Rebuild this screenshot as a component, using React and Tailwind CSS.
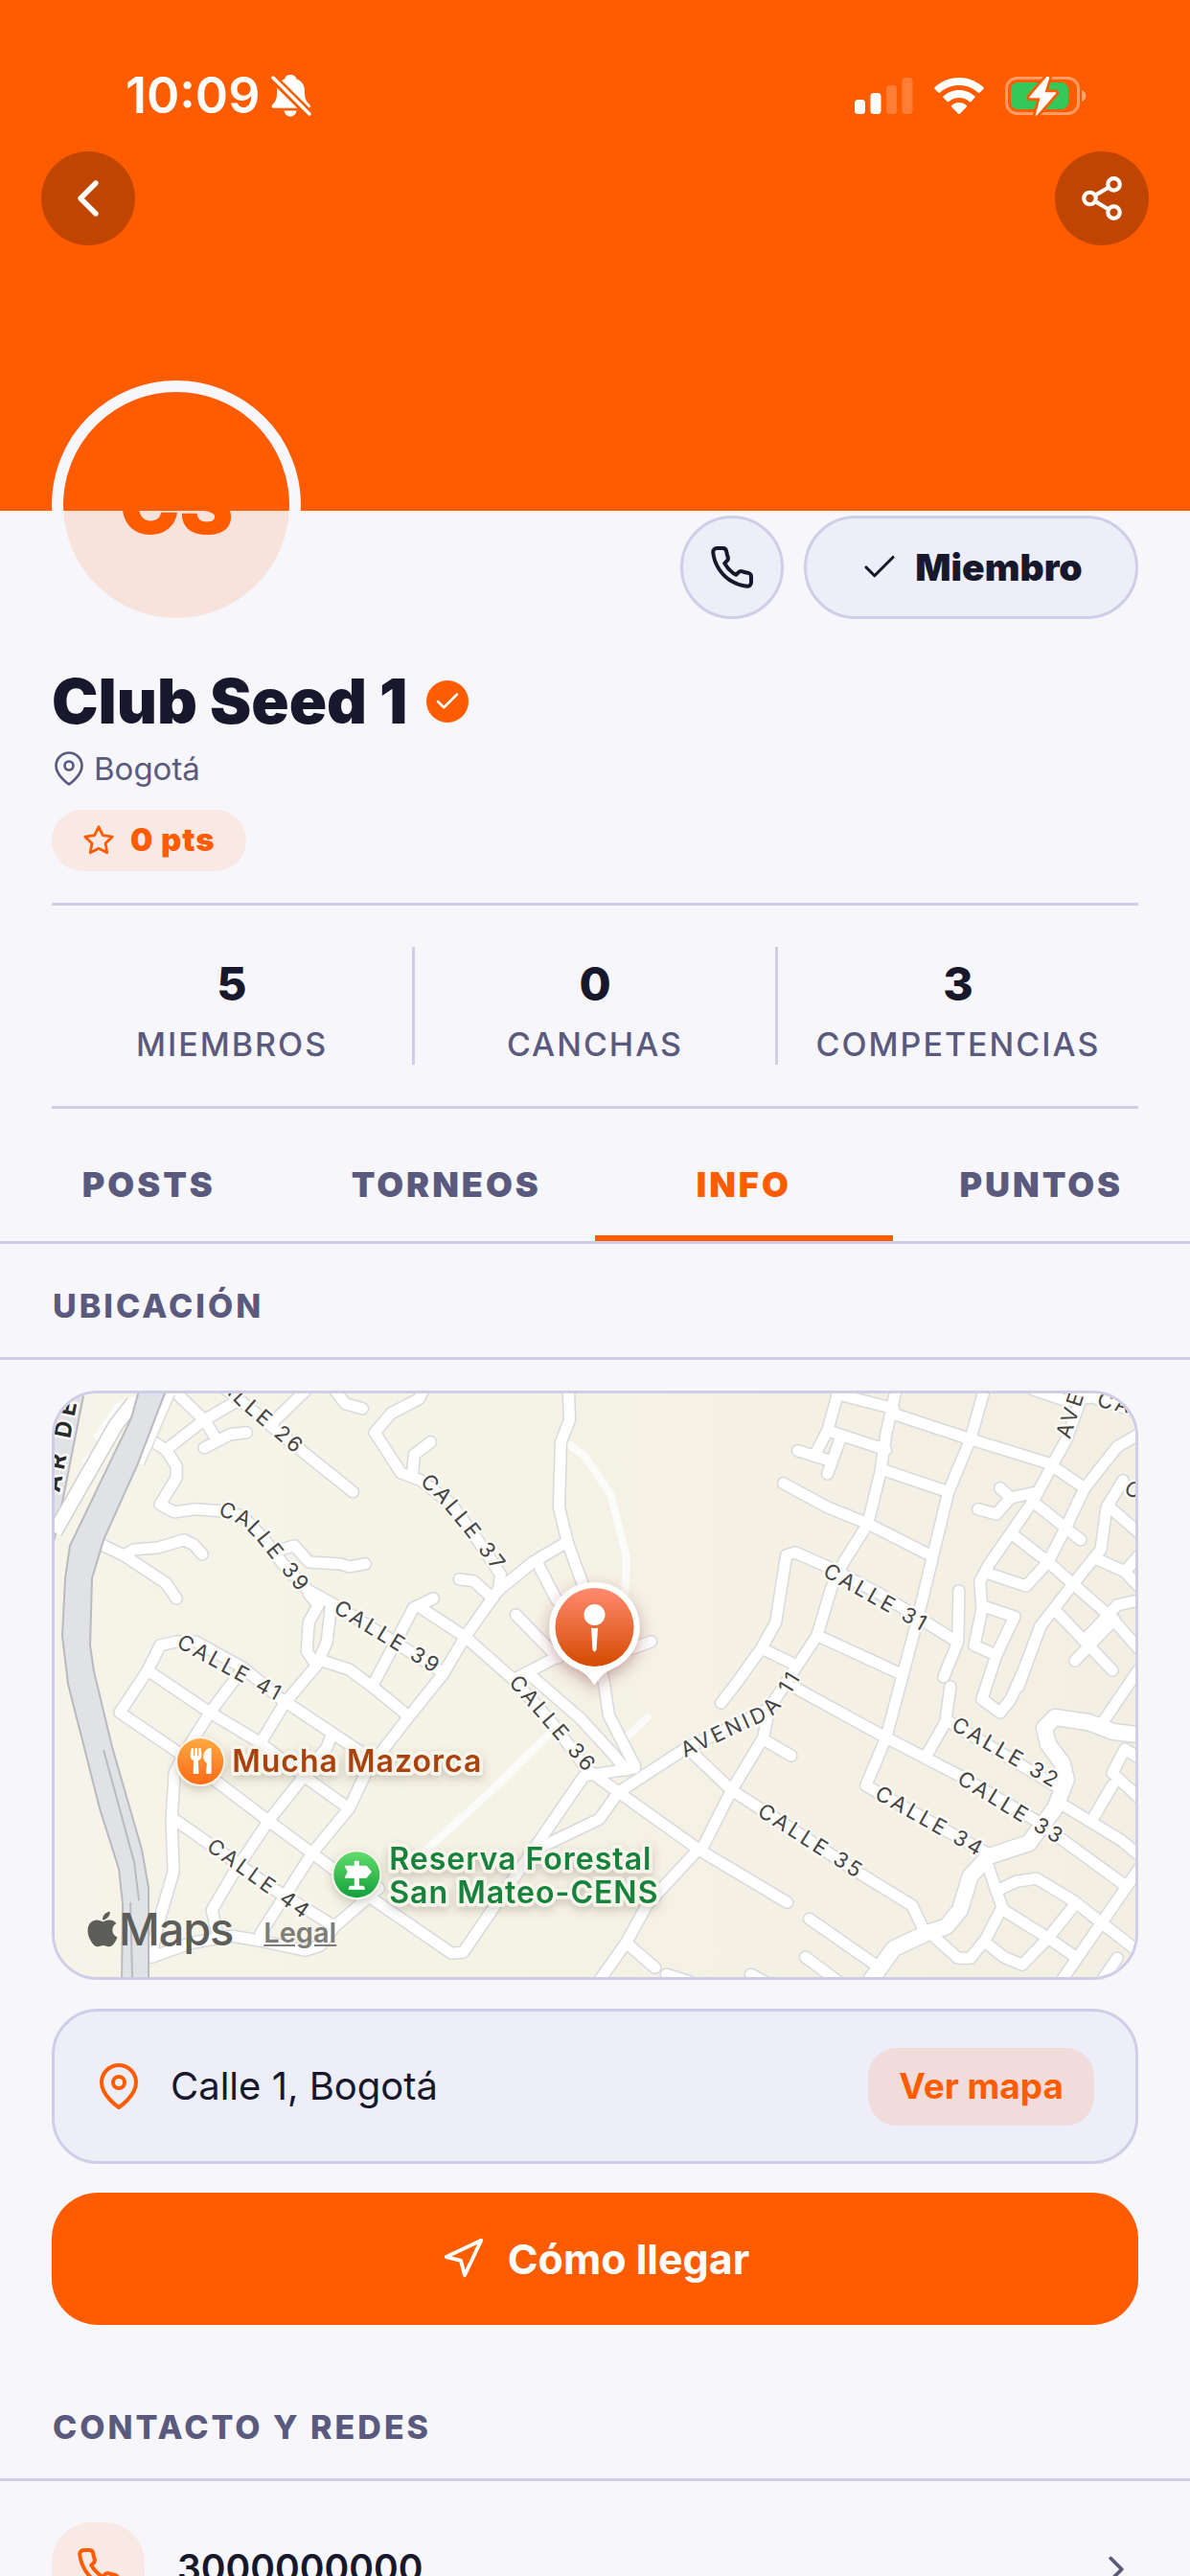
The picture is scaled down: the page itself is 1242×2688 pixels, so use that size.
import { useState } from "react";
import {
  FiCheck,
  FiChevronLeft,
  FiChevronRight,
  FiMapPin,
  FiNavigation,
  FiPhone,
  FiShare2,
  FiStar,
} from "react-icons/fi";
import { FaApple, FaUtensils } from "react-icons/fa";

const STATS = [
  { value: 5, label: "Miembros" },
  { value: 0, label: "Canchas" },
  { value: 3, label: "Competencias" },
];

const TABS = ["Posts", "Torneos", "Info", "Puntos"];

// Street centre lines, in map units (1127 x 609)
const STREETS = [
  "M125 -2 L156 28 L169 48",
  "M156 57 L183 43 L200 41",
  "M189 9 L156 28 L116 59",
  "M99 48 L116 59 L127 76 L127 88 L110 116 L125 124 L146 121 L173 123 L196 128 L219 153 L242 183 L265 206 L296 223 L400 288",
  "M179 -4 L200 13 L250 54 L311 103",
  "M261 -2 L229 29",
  "M293 -2 L303 11 L321 16",
  "M384 -2 L380 6 L351 21 L334 41 L361 83 L382 91 L414 116 L441 153 L465 189 L463 206",
  "M373 86 L375 64 L392 51",
  "M536 -2 L537 28 L528 51 L526 119 L535 156 L552 203 L573 303 L578 336 L605 389",
  "M533 156 L499 176 L462 206 L428 254 L405 293 L368 339 L326 393 L307 433 L269 479 L215 563",
  "M504 178 L522 213 L550 250",
  "M422 194 L437 196 L457 214",
  "M49 158 L72 169 L116 198 L127 214",
  "M72 169 L83 163 L108 161 L135 153 L145 158 L154 168",
  "M236 163 L250 159 L265 176 L298 178 L307 181 L324 178",
  "M265 209 L275 221 L265 239 L263 269 L273 284",
  "M288 223 L284 259 L273 284 L240 323 L215 364",
  "M192 293 L162 333 L135 376 L125 396 L122 446 L124 499 L108 553 L101 586",
  "M288 358 L284 369 L223 446 L185 503 L164 539 L169 560",
  "M279 279 L307 288 L334 308 L368 336",
  "M395 214 L374 224 L359 253 L332 304",
  "M382 224 L428 254 L479 299 L518 343 L556 393 L588 416 L672 476 L764 531",
  "M481 231 L525 276",
  "M495 293 L548 339 L582 376 L596 393",
  "M480 298 L522 276",
  "M603 266 L622 259",
  "M97 289 L68 333 L131 376 L223 446 L273 483 L334 529 L414 584 L426 583 L506 466 L552 399 L605 391",
  "M97 289 L110 263 L127 259 L147 259 L196 286 L235 318 L328 380",
  "M97 289 L162 333 L212 363 L265 403 L307 433",
  "M127 446 L166 473 L227 516 L292 556",
  "M101 588 L143 573 L185 566 L215 571 L261 581 L277 576 L292 556 L338 516",
  "M510 472 L568 444 L588 416",
  "M588 416 L657 371 L703 349 L745 329 L775 283 L795 253 L810 203 L823 176 L848 136 L861 83 L867 43 L877 -2",
  "M745 329 L739 359 L706 414 L676 473 L668 479 L618 533 L596 573 L569 611",
  "M739 361 L768 378",
  "M664 374 L706 414 L745 439 L837 499 L894 534 L908 563",
  "M596 573 L626 599",
  "M638 606 L661 613",
  "M726 606 L741 614",
  "M783 588 L818 614",
  "M787 548 L856 596",
  "M695 323 L712 301 L737 266 L752 239 L763 169 L772 166 L806 181 L860 209 L909 239 L936 256",
  "M737 266 L772 283",
  "M760 94 L806 119 L848 136 L913 169",
  "M969 -2 L955 48 L932 103 L915 173 L898 243 L883 299 L867 359 L846 409 L863 419 L971 479",
  "M796 253 L883 293",
  "M772 307 L867 359 L944 399 L1024 446 L1116 513",
  "M816 1 L875 16",
  "M873 21 L955 48 L1036 73 L1074 99",
  "M818 -4 L806 39 L793 64",
  "M806 39 L867 59",
  "M775 60 L810 71",
  "M819 48 L806 84",
  "M867 81 L932 103",
  "M1074 -4 L1055 48 L1020 113 L974 179 L965 196 L967 226 L959 263 L982 273",
  "M986 99 L997 109 L1020 104",
  "M963 121 L982 126 L997 109",
  "M1130 43 L1108 56 L1074 99 L1055 139 L1036 176 L1013 201 L974 188",
  "M1020 113 L1070 153",
  "M1001 149 L1036 176 L1062 199 L1101 233 L1130 266",
  "M1114 91 L1097 119 L1091 163 L1062 199 L1028 243 L1005 306",
  "M1099 118 L1130 145",
  "M1087 173 L1116 186 L1130 201",
  "M1130 170 L1116 186",
  "M1043 226 L1103 289",
  "M1064 279 L1105 236",
  "M1130 216 L1108 221 L1078 253",
  "M971 223 L1001 233 L982 273 L967 319 L986 333 L997 319 L1010 290 L1028 243",
  "M943 206 L942 259 L927 296",
  "M934 306 L929 343 L909 378",
  "M930 341 L1043 409",
  "M1020 -4 L1055 8 L1082 4 L1130 20",
  "M1130 289 L1093 343",
  "M1130 380 L1116 371 L1103 396 L1130 421",
  "M1103 409 L1083 443",
  "M1051 429 L1112 466 L1130 481",
  "M1130 497 L1051 611",
  "M971 486 L988 536 L971 569 L955 589 L942 589 L913 563",
  "M982 519 L1003 509 L1024 506 L1062 529 L1131 583",
  "M988 538 L1036 568 L1062 586",
  "M1064 533 L1036 568 L1009 596 L990 588 L971 573",
  "M1108 589 L1093 611",
];

const AVENUE =
  "M1130 356 L1104 353 L1078 343 L1043 338 L1032 349 L1036 366 L1051 386 L1055 403 L1043 433 L1016 469 L974 483 L955 503 L944 539 L930 556 L909 563 L875 579 L852 611";

const FOOTPATHS = [
  "M537 54 L553 66 L580 106 L596 169 L595 209",
  "M388 476 L457 413 L518 353",
  "M597 358 L618 338",
  "M33 70 L48 62 L30 85 M45 45 L66 15 L82 8",
];

const STREET_NAMES = [
  { text: "CALLE 26", d: "M165 -26 L198 8 L290 87" },
  { text: "CALLE 37", d: "M386 88 L406 107 L432 138 L492 216" },
  { text: "CALLE 39", d: "M173 119 L200 131 L217 148 L277 223" },
  { text: "CALLE 39", d: "M294 221 L430 304" },
  { text: "CALLE 41", d: "M130 257 L270 333" },
  { text: "CALLE 36", d: "M479 297 L580 414" },
  { text: "CALLE 44", d: "M162 469 L300 568" },
  { text: "AVENIDA 11", d: "M654 373 L700 351 L742 332 L758 314 L790 262" },
  { text: "CALLE 31", d: "M804 183 L940 259" },
  { text: "CALLE 32", d: "M938 343 L1080 425" },
  { text: "CALLE 33", d: "M944 399 L1090 488" },
  { text: "CALLE 34", d: "M858 415 L1000 495" },
  { text: "CALLE 35", d: "M736 433 L870 518" },
  { text: "AVENIDA", d: "M1051 46 L1085 -60" },
  { text: "CALLE", d: "M1088 6 L1200 30" },
  { text: "CALLE", d: "M1118 96 L1220 160" },
];

function StatusBar() {
  return (
    <div className="flex items-center justify-between pt-[68px] pr-[107px] pl-[131px] text-white">
      <div className="flex items-center gap-3">
        <span className="text-[52px] leading-[64px] font-semibold">10:09</span>
        <svg className="h-[46px] w-[42px]" viewBox="0 0 42 46" fill="currentColor">
          <path d="M20 1c3.600 0 6 2 6.700 4.600C33 8 35 13 35 19c0 7 1.500 9.500 5 13 1.500 1.700 1 3.800-1 3.800H3c-2.500 0-3-2.200-1.500-3.800C5 28.500 6 26 6 19c0-7 3-11.500 8-13.400C14.600 3 16.500 1 20 1z" />
          <path d="M13.500 38.500h13c-.5 3.700-3.200 6-6.500 6s-6-2.300-6.500-6z" />
          <path d="M1.500 4L41 43" className="stroke-[#ff5c00]" strokeWidth="9" />
          <path d="M2 4L40 42" stroke="currentColor" strokeWidth="3.500" strokeLinecap="round" />
        </svg>
      </div>
      <div className="flex items-center gap-[22px]">
        <svg className="h-10 w-[61px]" viewBox="0 0 61 40" fill="currentColor">
          <rect x="0" y="24" width="11" height="15" rx="3.500" />
          <rect x="16.500" y="17" width="11" height="22" rx="3.500" />
          <rect x="33" y="9" width="11" height="30" rx="3.500" opacity=".22" />
          <rect x="49.500" y="1" width="11" height="38" rx="3.500" opacity=".22" />
        </svg>
        <svg className="h-10 w-[52px]" viewBox="0 0 52 40" fill="currentColor">
          <path d="M26 1C36 1 45 5 51.300 11c.6.600.6 1.300 0 1.900l-3.600 3.600c-.6.600-1.300.5-1.900 0C40.500 11.600 33.500 9 26 9S11.500 11.600 6.200 16.500c-.6.500-1.300.6-1.900 0L.7 12.900c-.6-.6-.6-1.300 0-1.900C7 5 16 1 26 1z" />
          <path d="M26 14c6.300 0 12 2.400 16.300 6.300.6.600.6 1.200 0 1.800l-3.800 3.800c-.6.600-1.200.5-1.800 0C33.800 23.400 30 22 26 22s-7.800 1.400-10.700 3.900c-.6.500-1.200.6-1.800 0l-3.800-3.800c-.6-.6-.6-1.200 0-1.800C14 16.400 19.700 14 26 14z" />
          <path d="M26 27c3 0 5.700 1.100 7.700 2.900.6.600.6 1.200 0 1.800l-6.600 6.700c-.7.700-1.500.7-2.200 0l-6.600-6.700c-.6-.6-.6-1.200 0-1.800C20.300 28.100 23 27 26 27z" />
        </svg>
        <svg className="h-[42px] w-[86px]" viewBox="0 0 86 42">
          <rect x="1.500" y="2.500" width="75" height="37" rx="11" fill="none" stroke="#fff" strokeOpacity=".4" strokeWidth="3" />
          <path d="M80 15c3 1 4.500 3.500 4.500 6s-1.500 5-4.500 6z" fill="#fff" fillOpacity=".45" />
          <rect x="6" y="7" width="60" height="28" rx="7" fill="#34c759" />
          <path
            d="M44 1.500L26 22.500h11.500L32.500 41 52.500 18H40.500L45.500 2z"
            fill="#fff"
            className="stroke-[#ff5c00]"
            strokeWidth="7"
            strokeLinejoin="round"
            paintOrder="stroke"
          />
          <path d="M44 1.500L26 22.500h11.500L32.500 41 52.500 18H40.500L45.500 2z" fill="#fff" stroke="#fff" strokeWidth="1.500" strokeLinejoin="round" />
        </svg>
      </div>
    </div>
  );
}

function SectionTitle({ children }) {
  return (
    <h2 className="flex h-[121px] items-center border-b-[3px] border-[#cfcee8] px-[55px] pt-3 text-[34px] leading-10 font-extrabold tracking-[3px] text-[#5a5a7e] uppercase">
      {children}
    </h2>
  );
}

function LocationMap() {
  return (
    <div className="relative h-[615px] overflow-hidden rounded-[48px] border-[3px] border-[#cfcee8] bg-[#f6f3e8]">
      <svg className="h-full w-full" viewBox="0 0 1127 609" preserveAspectRatio="xMidYMid slice">
        <defs>
          <linearGradient id="pin" x1="0" y1="0" x2="0" y2="1">
            <stop offset="0" stopColor="#ff8a70" />
            <stop offset="1" stopColor="#d44a00" />
          </linearGradient>
          <linearGradient id="food" x1="0" y1="0" x2="0" y2="1">
            <stop offset="0" stopColor="#ffa940" />
            <stop offset="1" stopColor="#fd6a17" />
          </linearGradient>
          <linearGradient id="park" x1="0" y1="0" x2="0" y2="1">
            <stop offset="0" stopColor="#63dc6c" />
            <stop offset="1" stopColor="#12a03c" />
          </linearGradient>
          <linearGradient id="land" x1="0" y1="0" x2="1" y2="0">
            <stop offset="0" stopColor="#f6f4e8" />
            <stop offset="1" stopColor="#f4efe3" />
          </linearGradient>
          <filter id="drop" x="-50%" y="-50%" width="200%" height="200%">
            <feDropShadow dx="0" dy="6" stdDeviation="8" floodColor="#7a3030" floodOpacity=".4" />
          </filter>
          <filter id="soft" x="-20%" y="-50%" width="140%" height="200%">
            <feDropShadow dx="0" dy="4" stdDeviation="5" floodColor="#50462e" floodOpacity=".25" />
          </filter>
        </defs>

        <rect width="1127" height="609" fill="url(#land)" />

        {/* Footpaths */}
        <g fill="none" stroke="#fbfbf9" strokeWidth="8" strokeLinecap="round" strokeLinejoin="round">
          {FOOTPATHS.map((d) => (
            <path key={d} d={d} />
          ))}
        </g>

        {/* Streets: outline first, then the white fill */}
        <g fill="none" stroke="#d8d9dc" strokeLinecap="round" strokeLinejoin="round">
          {STREETS.map((d) => (
            <path key={d} d={d} strokeWidth="14" />
          ))}
          <path d={AVENUE} strokeWidth="19" />
        </g>
        <g fill="none" stroke="#fff" strokeLinecap="round" strokeLinejoin="round">
          {STREETS.map((d) => (
            <path key={d} d={d} strokeWidth="11" />
          ))}
          <path d={AVENUE} strokeWidth="16" />
        </g>

        {/* Motorway on the west side */}
        <path d="M-2 -2 L31 -2 L9 109 L-2 160z" fill="#e1e2e6" stroke="#b9bac0" strokeWidth="2" />
        <path d="M82 10 L64 33 L0 145" fill="none" stroke="#cfd0d4" strokeWidth="17" />
        <path d="M82 10 L64 33 L0 145" fill="none" stroke="#fff" strokeWidth="14" />
        <path d="M121 0 L89 73" stroke="#dcdddf" strokeWidth="11" />
        <path d="M121 0 L89 73" stroke="#fff" strokeWidth="8" />
        <path
          d="M88 -3 L80 26 L16 159 L11 193 L8 253 L14 303 L47 433 L67 496 L71 533 L70 612 L98 612 L98 516 L91 476 L60 369 L41 290 L37 263 L39 193 L51 153 L87 73 L116 -3z"
          fill="#e1e2e6"
          stroke="#b9bac0"
          strokeWidth="2"
        />
        <path d="M51 372 L83 489 L88 529 M79 531 L81 609" fill="none" stroke="#b9bac0" strokeWidth="2" />

        {/* Street names */}
        <g
          className="text-[22px] tracking-[3px]"
          fill="#444"
          stroke="#fbfaf6"
          strokeWidth="5"
          strokeLinejoin="round"
          paintOrder="stroke"
        >
          {STREET_NAMES.map((name, i) => (
            <g key={i}>
              <path id={`street-${i}`} d={name.d} fill="none" stroke="none" />
              <text dy="8">
                <textPath href={`#street-${i}`}>{name.text}</textPath>
              </text>
            </g>
          ))}
          <text transform="translate(5 104) rotate(-79)" className="text-[24px] font-bold tracking-[6px]" fill="#2a2a2a">
            AR DE
          </text>
        </g>

        {/* Places */}
        <g filter="url(#soft)">
          <circle cx="152" cy="384" r="26" fill="#f8f5ec" />
          <circle cx="152" cy="384" r="24" fill="url(#food)" />
          <FaUtensils x="139" y="370" size="27" color="#fff" />
        </g>
        <g filter="url(#soft)">
          <circle cx="315" cy="502" r="26" fill="#f8f5ec" />
          <circle cx="315" cy="502" r="24" fill="url(#park)" />
          <path
            d="M313 488h4v5h8l5 6-5 6h-8v9h4q2 0 2 3h-16q0-3 2-3h4v-9h-10l3-6-3-6h10z"
            fill="#fff"
            stroke="#fff"
            strokeWidth="1"
            strokeLinejoin="round"
          />
        </g>
        <g
          className="text-[32px] font-semibold tracking-[1px]"
          stroke="#f8f5ec"
          strokeWidth="7"
          strokeLinejoin="round"
          paintOrder="stroke"
          filter="url(#soft)"
        >
          <text x="185" y="395" fill="#ab430c">
            Mucha Mazorca
          </text>
          <text x="349" y="497" fill="#17823a">
            Reserva Forestal
          </text>
          <text x="349" y="532" fill="#17823a">
            San Mateo-CENS
          </text>
        </g>

        {/* Club marker */}
        <g filter="url(#drop)">
          <path
            d="M563 197a47 47 0 0 1 18 90.500C573 291 569 296 563 304C557 296 553 291 545 287.500A47 47 0 0 1 563 197z"
            fill="#fff"
          />
        </g>
        <circle cx="563" cy="244" r="41" fill="url(#pin)" />
        <circle cx="563" cy="231" r="11" fill="#fff" />
        <path d="M559.500 244.500q3.500 1 7 0l-1.500 23q-2 4-4 0z" fill="#fff" />
      </svg>

      <div className="absolute bottom-[22px] left-[29px] flex items-center text-[#5d5d59]">
        <FaApple className="-mr-1 size-[42px]" />
        <span className="text-[47px] leading-[56px] font-medium tracking-tight">Maps</span>
        <a href="#legal" className="mt-2 ml-8 text-[29px] leading-8 font-semibold text-[#7d7d78] underline">
          Legal
        </a>
      </div>
    </div>
  );
}

export default function App() {
  const [tab, setTab] = useState("Info");

  return (
    <div className="h-screen overflow-hidden bg-[#f7f6fb] font-['Inter',sans-serif] text-[#18182c]">
      <header className="h-[533px] bg-[#ff5c00]">
        <StatusBar />
        <div className="flex justify-between px-[43px] pt-[26px] text-white">
          <button aria-label="Volver" className="flex size-[98px] items-center justify-center rounded-full bg-black/25">
            <FiChevronLeft className="size-16" />
          </button>
          <button aria-label="Compartir" className="flex size-[98px] items-center justify-center rounded-full bg-black/25">
            <FiShare2 className="size-[50px]" />
          </button>
        </div>
      </header>

      <section className="px-[54px]">
        <div className="relative -mt-[136px] flex items-end justify-between">
          <div className="flex size-[260px] items-center justify-center rounded-full border-[12px] border-[#f7f6fb] bg-[#ff5c00]/12 bg-clip-padding text-[84px] font-black text-[#ff5c00]">
            CS
          </div>
          <div className="mb-[11px] flex gap-[21px]">
            <button
              aria-label="Llamar"
              className="flex size-[108px] items-center justify-center rounded-full border-[3px] border-[#cfcee8] bg-[#eeeef8]"
            >
              <FiPhone className="size-12" />
            </button>
            <button className="flex h-[108px] w-[349px] items-center justify-center gap-4 rounded-full border-[3px] border-[#cfcee8] bg-[#eeeef8] text-[39px] font-black">
              <FiCheck className="size-[42px]" strokeWidth={1.8} />
              Miembro
            </button>
          </div>
        </div>

        <div className="mt-[37px] flex items-center gap-5">
          <h1 className="text-[65px] leading-[76px] font-black">Club Seed 1</h1>
          <span className="flex size-11 items-center justify-center rounded-full bg-[#ff5c00] text-white">
            <FiCheck className="size-[30px]" />
          </span>
        </div>

        <p className="mt-3 flex h-10 items-center gap-2 text-[33px] leading-10 text-[#5a5a7e]">
          <FiMapPin className="size-9" strokeWidth={1.8} />
          Bogotá
        </p>

        <div className="mt-[23px] flex h-16 w-fit items-center gap-4 rounded-full bg-[#f8e9e4] px-8 text-[33px] font-black tracking-[1px] text-[#ff5c00]">
          <FiStar className="size-[34px]" />
          0 pts
        </div>

        <dl className="mt-[33px] flex divide-x-[3px] divide-[#cfcee8] border-y-[3px] border-[#cfcee8] py-[43px]">
          {STATS.map((stat) => (
            <div key={stat.label} className="flex h-[123px] flex-1 basis-0 flex-col-reverse items-center justify-start gap-[14px]">
              <dt className="text-[34px] leading-[42px] font-medium tracking-[2px] text-[#5a5a7e] uppercase">
                {stat.label}
              </dt>
              <dd className="text-[48px] leading-[56px] font-extrabold">{stat.value}</dd>
            </div>
          ))}
        </dl>
      </section>

      <nav className="grid grid-cols-4 border-b-[3px] border-[#cfcee8]">
        {TABS.map((name) => (
          <button
            key={name}
            onClick={() => setTab(name)}
            className={`h-[138px] border-b-[6px] pt-[25px] text-[36px] font-black tracking-[3px] uppercase ${
              tab === name ? "border-[#ff5c00] text-[#ff5c00]" : "border-transparent text-[#5a5a7e]"
            }`}
          >
            {name}
          </button>
        ))}
      </nav>

      <section>
        <SectionTitle>Ubicación</SectionTitle>
        <div className="flex flex-col gap-[30px] px-[54px] pt-8">
          <LocationMap />
          <div className="flex h-[162px] items-center rounded-[48px] border-[3px] border-[#cfcee8] bg-[#eeeef8] px-[43px]">
            <FiMapPin className="size-12 text-[#ff5c00]" />
            <span className="ml-[30px] flex-1 text-[40px]">Calle 1, Bogotá</span>
            <button className="h-[81px] rounded-[30px] bg-[#f0dcda] px-8 text-[37px] font-bold text-[#ff5c00]">
              Ver mapa
            </button>
          </div>
          <button className="flex h-[138px] items-center justify-center gap-6 rounded-[48px] bg-[#ff5c00] text-[43px] font-bold text-white">
            <FiNavigation className="size-[46px]" />
            Cómo llegar
          </button>
        </div>
      </section>

      <section className="pt-[42px]">
        <SectionTitle>Contacto y redes</SectionTitle>
        <a href="tel:3000000000" className="flex items-center px-[54px] pt-[43px]">
          <span className="flex size-[97px] items-center justify-center rounded-[42px] bg-[#f8e9e4] text-[#ff5c00]">
            <FiPhone className="size-12" />
          </span>
          <span className="ml-[34px] flex-1 text-[39px] font-semibold">3000000000</span>
          <FiChevronRight className="size-[46px] text-[#5a5a7e]" />
        </a>
      </section>
    </div>
  );
}
